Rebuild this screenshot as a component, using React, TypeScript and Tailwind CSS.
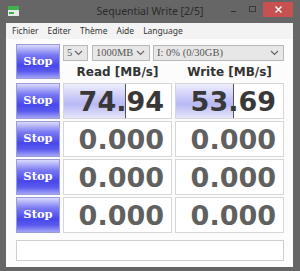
import React from "react";

const rows = [
  { read: "74.94", write: "53.69", active: true },
  { read: "0.000", write: "0.000", active: false },
  { read: "0.000", write: "0.000", active: false },
  { read: "0.000", write: "0.000", active: false },
];

function StopButton({ className = "" }: { className?: string }) {
  return (
    <button
      className={
        "w-[44px] flex items-center justify-center border border-[#9c9cd8] bg-[linear-gradient(to_bottom,#dadafd_0%,#7a7af3_30%,#4747ec_62%,#5a5aee_80%,#a4a4f7_100%)] text-white font-['DejaVu_Serif',serif] font-bold text-[11.5px] " +
        className
      }
    >
      Stop
    </button>
  );
}

function Select({ label, className }: { label: string; className: string }) {
  return (
    <div
      className={
        "h-[16px] flex items-center justify-between border border-[#b9b9b9] bg-[#e7e7e7] pl-[3px] pr-[4px] text-[#555] font-['Liberation_Serif',serif] text-[10.5px] " +
        className
      }
    >
      <span>{label}</span>
      <svg width="9" height="6" viewBox="0 0 9 6">
        <path d="M1 1 L4.5 4.5 L8 1" fill="none" stroke="#666" strokeWidth="1.2" />
      </svg>
    </div>
  );
}

export default function App() {
  return (
    <div className="w-[300px] h-[271px] bg-[#666666] flex flex-col overflow-hidden">
      {/* Title bar */}
      <div className="h-[23px] flex items-start relative">
        <svg className="absolute left-[8px] top-[6px]" width="11" height="10" viewBox="0 0 11 10">
          <rect x="0" y="0" width="11" height="4" fill="#3fb24a" />
          <rect x="0" y="4" width="11" height="6" fill="#e8e8e8" />
          <rect x="1" y="6" width="5" height="2" fill="#3fb24a" />
        </svg>
        <div className="absolute left-0 right-0 top-[4px] text-center text-[#2a2a2a] font-['Noto_Sans',sans-serif] text-[10.5px] leading-[14px]">
          Sequential Write [2/5]
        </div>
        <div className="absolute left-[231px] top-[11px] w-[5px] h-[1px] bg-[#2e2e2e]" />
        <div className="absolute left-[249px] top-[6px] w-[7px] h-[6px] border border-[#3a3a3a]" />
        <div className="absolute left-[263px] top-[2px] w-[30px] h-[15px] bg-[#c75050] flex items-center justify-center">
          <svg width="7" height="7" viewBox="0 0 7 7">
            <path d="M0.5 0.5 L6.5 6.5 M6.5 0.5 L0.5 6.5" stroke="#fff" strokeWidth="1.4" />
          </svg>
        </div>
      </div>

      {/* Client area */}
      <div className="ml-[6px] mr-[7px] flex flex-col bg-[#fcfcfc]">
        {/* Menu */}
        <div className="h-[16px] bg-[#f3f3f3] flex items-center gap-[9px] pl-[6px] text-[#333] font-['Noto_Sans',sans-serif] text-[8.5px]">
          <span>Fichier</span>
          <span>Editer</span>
          <span>Thème</span>
          <span>Aide</span>
          <span>Language</span>
        </div>

        <div className="flex flex-col pl-[10px] pr-[9px] pt-[5px] pb-[6px]">
          {/* Top row */}
          <div className="flex gap-[3px] h-[37px]">
            <StopButton className="h-[35px]" />
            <div className="flex flex-col w-[221px]">
              <div className="flex mt-[1px]">
                <Select label="5" className="w-[25px]" />
                <Select label="1000MB" className="w-[58px] ml-[4px]" />
                <Select label="I: 0% (0/30GB)" className="w-[131px] ml-[3px]" />
              </div>
              <div className="flex-1 grid grid-cols-2 gap-[3px] items-center text-center text-[#333] font-['DejaVu_Sans',sans-serif] font-bold text-[12px] pt-[1px]">
                <span>Read [MB/s]</span>
                <span>Write [MB/s]</span>
              </div>
            </div>
          </div>

          {/* Result rows */}
          <div className="flex flex-col gap-[2px] mt-[2px]">
            {rows.map((r, i) => (
              <div key={i} className="flex gap-[3px] h-[36px]">
                <StopButton />
                {[r.read, r.write].map((v, j) => (
                  <div
                    key={j}
                    className="relative w-[109px] border border-[#d6d6d6] bg-white flex items-center justify-end pr-[7px]"
                  >
                    {r.active && (
                      <div
                        className={
                          "absolute left-0 top-0 bottom-0 border-r border-[#555] bg-[linear-gradient(to_bottom,#eeeefd_0%,#c4c4f6_45%,#b9b9f4_60%,#e6e6fb_100%)] " +
                          (j === 0 ? "w-[62px]" : "w-[58px]")
                        }
                      />
                    )}
                    <span
                      className={
                        "relative font-['DejaVu_Sans',sans-serif] font-bold text-[27px] leading-none " +
                        (r.active ? "text-[#383838]" : "text-[#606060]")
                      }
                    >
                      {v}
                    </span>
                  </div>
                ))}
              </div>
            ))}
          </div>

          {/* Comment box */}
          <div className="mt-[7px] h-[21px] border border-[#cfcfcf] bg-white" />
        </div>
      </div>
    </div>
  );
}
